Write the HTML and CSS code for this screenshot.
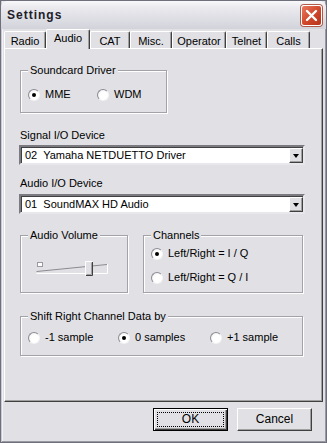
FILE: index.html
```html
<!DOCTYPE html>
<html>
<head>
<meta charset="utf-8">
<title>Settings</title>
<link rel="stylesheet" href="styles.css">
</head>
<body>
<div class="window">
  <div class="titlebar">
    <span class="title">Settings</span>
    <span class="close">
      <svg width="13" height="13" viewBox="0 0 13 13"><path d="M2 2 L11 11 M11 2 L2 11" stroke="#fff" stroke-width="2.4" stroke-linecap="round"/></svg>
    </span>
  </div>
  <div class="tabs">
    <div class="tab t-radio">Radio</div>
    <div class="tab t-audio active">Audio</div>
    <div class="tab t-cat">CAT</div>
    <div class="tab t-misc">Misc.</div>
    <div class="tab t-op">Operator</div>
    <div class="tab t-telnet">Telnet</div>
    <div class="tab t-calls">Calls</div>
  </div>
  <div class="panel">
    <fieldset class="group g-driver">
      <legend>Soundcard Driver</legend>
      <div class="radios">
        <label class="opt w-mme"><span class="radio checked"></span>MME</label>
        <label class="opt"><span class="radio"></span>WDM</label>
      </div>
    </fieldset>

    <div class="field-label first">Signal I/O Device</div>
    <div class="combo"><span class="combo-text">02  Yamaha NETDUETTO Driver</span><span class="drop"><span class="arrow"></span></span></div>

    <div class="field-label second">Audio I/O Device</div>
    <div class="combo"><span class="combo-text">01  SoundMAX HD Audio</span><span class="drop"><span class="arrow"></span></span></div>

    <div class="group-row">
      <fieldset class="group g-vol">
        <legend>Audio Volume</legend>
        <svg class="slider" width="72" height="16" viewBox="0 0 72 16">
          <rect x="1.5" y="1.5" width="5" height="4" fill="#fff" stroke="#9a9aa0"/>
          <path d="M0.5 10.5 L71 3.5" stroke="#8a8a90" fill="none"/>
          <path d="M0.5 12.5 L71.5 12.5 L71.5 3" stroke="#fff" fill="none"/>
          <rect x="49" y="0" width="8" height="15" fill="#e1e1e5"/>
          <path d="M49.5 14.5 L49.5 0.5 L56.5 0.5" stroke="#fff" fill="none"/>
          <path d="M50 14.5 L56.5 14.5 L56.5 1" stroke="#404040" fill="none"/>
          <path d="M50.5 13.5 L55.5 13.5 L55.5 1.5" stroke="#a0a0a0" fill="none"/>
        </svg>
      </fieldset>
      <fieldset class="group g-ch">
        <legend>Channels</legend>
        <label class="opt row1"><span class="radio checked"></span>Left/Right = I / Q</label>
        <label class="opt row2"><span class="radio"></span>Left/Right = Q / I</label>
      </fieldset>
    </div>

    <fieldset class="group g-shift">
      <legend>Shift Right Channel Data by</legend>
      <div class="radios">
        <label class="opt w-shift"><span class="radio"></span>-1 sample</label>
        <label class="opt w-shift2"><span class="radio checked"></span>0 samples</label>
        <label class="opt"><span class="radio"></span>+1 sample</label>
      </div>
    </fieldset>
  </div>
  <div class="footer">
    <div class="btn default"><span class="focus">OK</span></div>
    <div class="btn">Cancel</div>
  </div>
</div>
</body>
</html>
```

FILE: styles.css
```css
html, body {
  margin: 0;
  padding: 0;
}
body {
  width: 327px;
  height: 443px;
  overflow: hidden;
  background: #e1e1e5;
  font-family: "Liberation Sans", Arial, sans-serif;
  font-size: 11px;
  line-height: 13px;
  color: #000;
}
.window {
  box-sizing: border-box;
  width: 327px;
  height: 443px;
  background: #e1e1e5;
  border: 1px solid #6f6f7c;
  box-shadow: inset 1px 0 #c9c9d2, inset -1px 0 #9a9aa4, inset 0 -1px #9a9aa4, inset 2px 0 #f2f2f6;
  padding: 0 2px 2px 2px;
  display: flex;
  flex-direction: column;
}
.titlebar {
  height: 28px;
  margin: 0 -2px;
  display: flex;
  align-items: center;
  justify-content: space-between;
  padding: 0 4px 0 6px;
  background: linear-gradient(#f9f9fb 0%, #e9e9ee 25%, #dcdce3 70%, #d2d2da 100%);
  border-radius: 6px 6px 0 0;
}
.title {
  font-weight: bold;
  font-size: 12px;
  letter-spacing: 1px;
  color: #202028;
  padding-top: 1px;
}
.close {
  width: 19px;
  height: 19px;
  border: 1px solid #fff;
  border-radius: 3px;
  background: linear-gradient(135deg, #e77a60 0%, #d2492c 50%, #b5321a 100%);
  box-shadow: 0 0 0 1px #b05a4a;
  display: flex;
  align-items: center;
  justify-content: center;
}
.close svg { display: block; }

.tabs {
  height: 19px;
  display: flex;
  align-items: flex-end;
  padding-left: 1px;
  position: relative;
  z-index: 2;
}
.tab {
  box-sizing: border-box;
  height: 17px;
  padding-top: 3px;
  text-align: center;
  border-top: 1px solid #fff;
  border-left: 1px solid #fff;
  border-right: 1px solid #404040;
  box-shadow: inset -1px 0 #a0a0a0;
  border-radius: 2px 2px 0 0;
  background: #e1e1e5;
}
.tab.active {
  height: 20px;
  margin-bottom: -1px;
  padding-top: 2px;
}
.t-radio { width: 42px; }
.t-audio { width: 44px; }
.t-cat { width: 40px; }
.t-misc { width: 42px; }
.t-op { width: 54px; }
.t-telnet { width: 41px; }
.t-calls { width: 43px; }

.panel {
  box-sizing: border-box;
  width: 319px;
  height: 354px;
  margin-left: 1px;
  border-top: 1px solid #fff;
  border-left: 1px solid #fff;
  border-right: 1px solid #404040;
  border-bottom: 1px solid #404040;
  box-shadow: inset -1px -1px #a0a0a0;
  padding: 15px 0 0 15px;
  position: relative;
  z-index: 1;
}

.group {
  box-sizing: border-box;
  margin: 0;
  padding: 0 0 0 7px;
  border: 1px solid #a2a2a8;
  box-shadow: inset 1px 1px #fff, 1px 1px #fff;
  min-width: 0;
}
.group legend {
  padding: 0 2px;
  background: #e1e1e5;
  line-height: 13px;
}
.g-driver {
  width: 147px;
  height: 49px;
}
.radios {
  display: flex;
  align-items: center;
  padding-top: 11px;
}
.opt {
  display: flex;
  align-items: center;
  height: 13px;
  white-space: nowrap;
}
.radio {
  box-sizing: border-box;
  width: 12px;
  height: 12px;
  border-radius: 50%;
  border: 1px solid;
  border-color: #8c8c92 #f4f4f6 #f4f4f6 #8c8c92;
  background: radial-gradient(circle at 60% 60%, #ffffff 45%, #e6e6ea 100%);
  margin-right: 5px;
  margin-left: 0;
  position: relative;
  flex: none;
}
.radio.checked::after {
  content: "";
  position: absolute;
  left: 3px;
  top: 3px;
  width: 4px;
  height: 4px;
  border-radius: 50%;
  background: #000;
}
.w-mme { width: 69px; }

.field-label.first { margin-top: 16px; }
.field-label.second { margin-top: 12px; }
.combo {
  box-sizing: border-box;
  width: 286px;
  height: 20px;
  margin-left: -1px;
  margin-top: 3px;
  background: #fff;
  border: 2px solid;
  border-color: #7a7a80 #e8e8ec #e8e8ec #7a7a80;
  box-shadow: inset 1px 1px #404040;
  display: flex;
  align-items: center;
  justify-content: space-between;
}
.field-label.second + .combo { margin-top: 4px; }
.combo-text {
  white-space: pre;
  padding-left: 4px;
}
.drop {
  box-sizing: border-box;
  width: 14px;
  height: 15px;
  margin-right: 0;
  background: #e1e1e5;
  border-top: 1px solid #fff;
  border-left: 1px solid #fff;
  border-right: 1px solid #404040;
  border-bottom: 1px solid #404040;
  box-shadow: inset -1px -1px #a0a0a0;
  display: flex;
  align-items: center;
  justify-content: center;
}
.arrow {
  width: 0;
  height: 0;
  border-left: 3.5px solid transparent;
  border-right: 3.5px solid transparent;
  border-top: 4px solid #000;
  margin-top: 1px;
}

.group-row {
  display: flex;
  margin-top: 15px;
  gap: 15px;
}
.g-vol {
  width: 108px;
  height: 64px;
}
.slider {
  display: block;
  margin: 19px 0 0 8px;
}
.g-ch {
  width: 160px;
  height: 64px;
}
.g-ch .row1 { margin-top: 5px; }
.g-ch .row2 { margin-top: 11px; }

.g-shift {
  width: 283px;
  height: 46px;
  margin-top: 17px;
}
.g-shift .radios { padding-top: 8px; }
.w-shift { width: 90px; }
.w-shift2 { width: 92px; }

.footer {
  display: flex;
  justify-content: flex-end;
  gap: 9px;
  padding: 6px 12px 0 0;
}
.btn {
  box-sizing: border-box;
  width: 75px;
  height: 23px;
  background: #e1e1e5;
  border-top: 1px solid #fff;
  border-left: 1px solid #fff;
  border-right: 1px solid #404040;
  border-bottom: 1px solid #404040;
  box-shadow: inset -1px -1px #a0a0a0;
  display: flex;
  align-items: center;
  justify-content: center;
  font-size: 12px;
}
.btn.default {
  border: 1px solid #000;
  box-shadow: inset 1px 1px #fff, inset -1px -1px #404040, inset -2px -2px #a0a0a0;
  padding: 3px;
}
.focus {
  box-sizing: border-box;
  width: 100%;
  height: 100%;
  border: 1px dotted #000;
  display: flex;
  align-items: center;
  justify-content: center;
}
```
